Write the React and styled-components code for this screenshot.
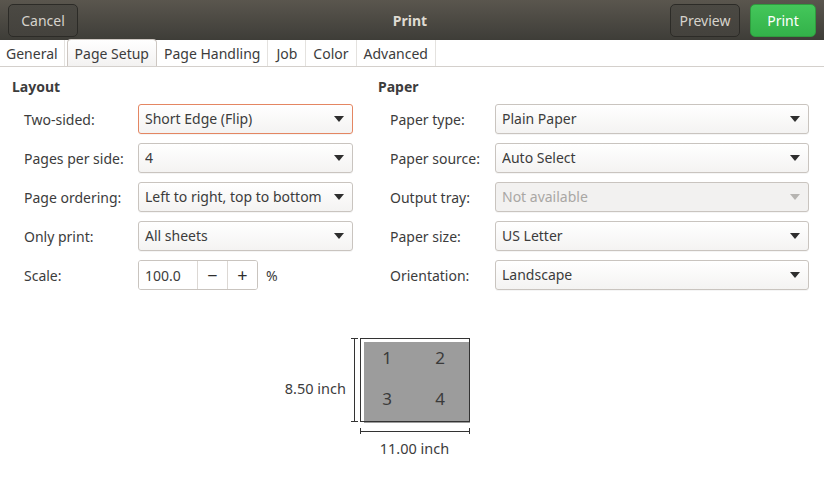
import React from 'react';
import styled, { createGlobalStyle } from 'styled-components';

const GlobalStyle = createGlobalStyle`
  body {
    margin: 0;
    background: #ffffff;
    font-family: "Noto Sans", "Open Sans", sans-serif;
    font-size: 14px;
    color: #3c3c3c;
  }
`;

const Window = styled.div`
  width: 824px;
  height: 480px;
  background: #ffffff;
  overflow: hidden;
`;

const HeaderBar = styled.div`
  height: 40px;
  display: flex;
  align-items: center;
  padding: 0 8px;
  box-sizing: border-box;
  background: linear-gradient(#5a564e, #3e3d38);
`;

const Title = styled.div`
  flex: 1;
  text-align: center;
  font-weight: bold;
  color: #dfdbd2;
  padding-left: 72px;
`;

const HeaderButton = styled.button`
  height: 33px;
  width: ${(p) => p.w || 70}px;
  padding: 0;
  border-radius: 5px;
  font-family: inherit;
  font-size: 14px;
  color: ${(p) => (p.primary ? '#ffffff' : '#d6d3cc')};
  border: 1px solid ${(p) => (p.primary ? '#2f9c3e' : '#2c2b27')};
  background: ${(p) =>
    p.primary ? 'linear-gradient(#44c75a, #33b24a)' : 'linear-gradient(#4b4943, #44423d)'};
  & + & {
    margin-left: 10px;
  }
`;

const TabRow = styled.div`
  height: 27px;
  display: flex;
  align-items: flex-end;
  border-bottom: 1px solid #d4d0cc;
  box-sizing: border-box;
`;

const Tab = styled.div`
  height: 26px;
  display: flex;
  align-items: center;
  padding: 0 ${(p) => p.pad || 6}px;
  box-sizing: border-box;
  border-right: 1px solid ${(p) => (p.active ? '#cdc7c2' : '#e4e2df')};
  ${(p) =>
    p.active &&
    `
    border: 1px solid #cdc7c2;
    border-bottom: none;
    border-radius: 4px 4px 0 0;
    background: linear-gradient(#ffffff, #f3f2f1);
    margin-left: 2px;
    height: 27px;
  `}
`;

const Body = styled.div`
  display: flex;
  padding: 10px 0 0 12px;
`;

const Section = styled.div`
  width: ${(p) => p.w}px;
`;

const SectionTitle = styled.div`
  font-weight: bold;
  line-height: 20px;
  margin-bottom: 7px;
`;

const Rows = styled.div`
  display: flex;
  flex-direction: column;
  gap: 9px;
  padding-left: 12px;
`;

const Row = styled.div`
  display: flex;
  align-items: center;
  height: 30px;
`;

const Label = styled.div`
  width: ${(p) => p.w}px;
  flex-shrink: 0;
`;

const Combo = styled.div`
  width: ${(p) => p.w}px;
  height: 30px;
  box-sizing: border-box;
  display: flex;
  align-items: center;
  padding: 0 8px 1px 6px;
  border-radius: 3px;
  border: 1px solid ${(p) => (p.focus ? '#e48662' : '#c9c4bf')};
  background: ${(p) =>
    p.disabled ? '#f2f1f0' : 'linear-gradient(#ffffff, #f4f3f2)'};
  color: ${(p) => (p.disabled ? '#a9a7a4' : '#3c3c3c')};
  box-shadow: 0 1px 0 rgba(0, 0, 0, 0.04);
`;

const ComboText = styled.span`
  flex: 1;
  white-space: nowrap;
  overflow: hidden;
`;

const Arrow = styled.span`
  width: 0;
  height: 0;
  border-left: 5px solid transparent;
  border-right: 5px solid transparent;
  border-top: 6px solid ${(p) => (p.disabled ? '#b6b4b1' : '#2e2e2e')};
  margin-left: 4px;
`;

const Spin = styled.div`
  display: flex;
  height: 30px;
  box-sizing: border-box;
  border: 1px solid #c9c4bf;
  border-radius: 3px;
  overflow: hidden;
`;

const SpinEntry = styled.div`
  width: 58px;
  display: flex;
  align-items: center;
  padding-left: 6px;
  box-sizing: border-box;
  background: #ffffff;
`;

const SpinButton = styled.div`
  width: 29px;
  display: flex;
  align-items: center;
  justify-content: center;
  border-left: 1px solid #dcd8d4;
  background: #ffffff;
  font-size: 18px;
  color: #2e2e2e;
`;

const Unit = styled.span`
  margin-left: 8px;
`;

const Preview = styled.div`
  display: grid;
  grid-template-columns: 67px 124px;
  justify-content: start;
  align-items: center;
  column-gap: 3px;
  padding: 44px 0 0 279px;
`;

const DimLabel = styled.div`
  line-height: 20px;
  text-align: right;
  font-size: 14.5px;
  margin-top: 8px;
`;

const WidthLabel = styled.div`
  grid-column: 2;
  text-align: center;
  padding-left: 11px;
  width: 109px;
  margin-top: 4px;
  font-size: 14.5px;
  line-height: 20px;
`;

const options = {
  layout: [
    { label: 'Two-sided:', value: 'Short Edge (Flip)', focus: true },
    { label: 'Pages per side:', value: '4' },
    { label: 'Page ordering:', value: 'Left to right, top to bottom' },
    { label: 'Only print:', value: 'All sheets' },
  ],
  paper: [
    { label: 'Paper type:', value: 'Plain Paper' },
    { label: 'Paper source:', value: 'Auto Select' },
    { label: 'Output tray:', value: 'Not available', disabled: true },
    { label: 'Paper size:', value: 'US Letter' },
    { label: 'Orientation:', value: 'Landscape' },
  ],
};

const tabs = [
  { name: 'General', pad: 6 },
  { name: 'Page Setup', active: true, pad: 7 },
  { name: 'Page Handling', pad: 7 },
  { name: 'Job', pad: 8 },
  { name: 'Color', pad: 7 },
  { name: 'Advanced', pad: 7 },
];

function PageSheet() {
  return (
    <svg width="124" height="100" viewBox="0 0 124 100">
      <g stroke="#333" strokeWidth="1" fill="none">
        <line x1="5.5" y1="4" x2="5.5" y2="88" />
        <line x1="2" y1="4.5" x2="9" y2="4.5" />
        <line x1="2" y1="87.5" x2="9" y2="87.5" />
        <line x1="11" y1="97.5" x2="121" y2="97.5" />
        <line x1="11.5" y1="94" x2="11.5" y2="101" />
        <line x1="120.5" y1="94" x2="120.5" y2="101" />
      </g>
      <rect x="15" y="8" width="106" height="81" fill="#9c9c9c" />
      <rect x="11.5" y="4.5" width="109" height="83" fill="none" stroke="#333" />
      <g fill="#3a3a3a" fontSize="17" fontFamily="Noto Sans, sans-serif" textAnchor="middle">
        <text x="38" y="30">1</text>
        <text x="91" y="30">2</text>
        <text x="38" y="71">3</text>
        <text x="91" y="71">4</text>
      </g>
    </svg>
  );
}

export default function App() {
  return (
    <Window>
      <GlobalStyle />
      <HeaderBar>
        <HeaderButton w={70}>Cancel</HeaderButton>
        <Title>Print</Title>
        <HeaderButton w={70}>Preview</HeaderButton>
        <HeaderButton w={66} primary>
          Print
        </HeaderButton>
      </HeaderBar>
      <TabRow>
        {tabs.map((t) => (
          <Tab key={t.name} active={t.active} pad={t.pad}>
            {t.name}
          </Tab>
        ))}
      </TabRow>
      <Body>
        <Section w={366}>
          <SectionTitle>Layout</SectionTitle>
          <Rows>
            {options.layout.map((o) => (
              <Row key={o.label}>
                <Label w={114}>{o.label}</Label>
                <Combo w={215} focus={o.focus}>
                  <ComboText>{o.value}</ComboText>
                  <Arrow />
                </Combo>
              </Row>
            ))}
            <Row>
              <Label w={114}>Scale:</Label>
              <Spin>
                <SpinEntry>100.0</SpinEntry>
                <SpinButton>−</SpinButton>
                <SpinButton>+</SpinButton>
              </Spin>
              <Unit>%</Unit>
            </Row>
          </Rows>
        </Section>
        <Section w={440}>
          <SectionTitle>Paper</SectionTitle>
          <Rows>
            {options.paper.map((o) => (
              <Row key={o.label}>
                <Label w={105}>{o.label}</Label>
                <Combo w={314} disabled={o.disabled}>
                  <ComboText>{o.value}</ComboText>
                  <Arrow disabled={o.disabled} />
                </Combo>
              </Row>
            ))}
          </Rows>
        </Section>
      </Body>
      <Preview>
        <DimLabel>8.50 inch</DimLabel>
        <PageSheet />
        <WidthLabel>11.00 inch</WidthLabel>
      </Preview>
    </Window>
  );
}
